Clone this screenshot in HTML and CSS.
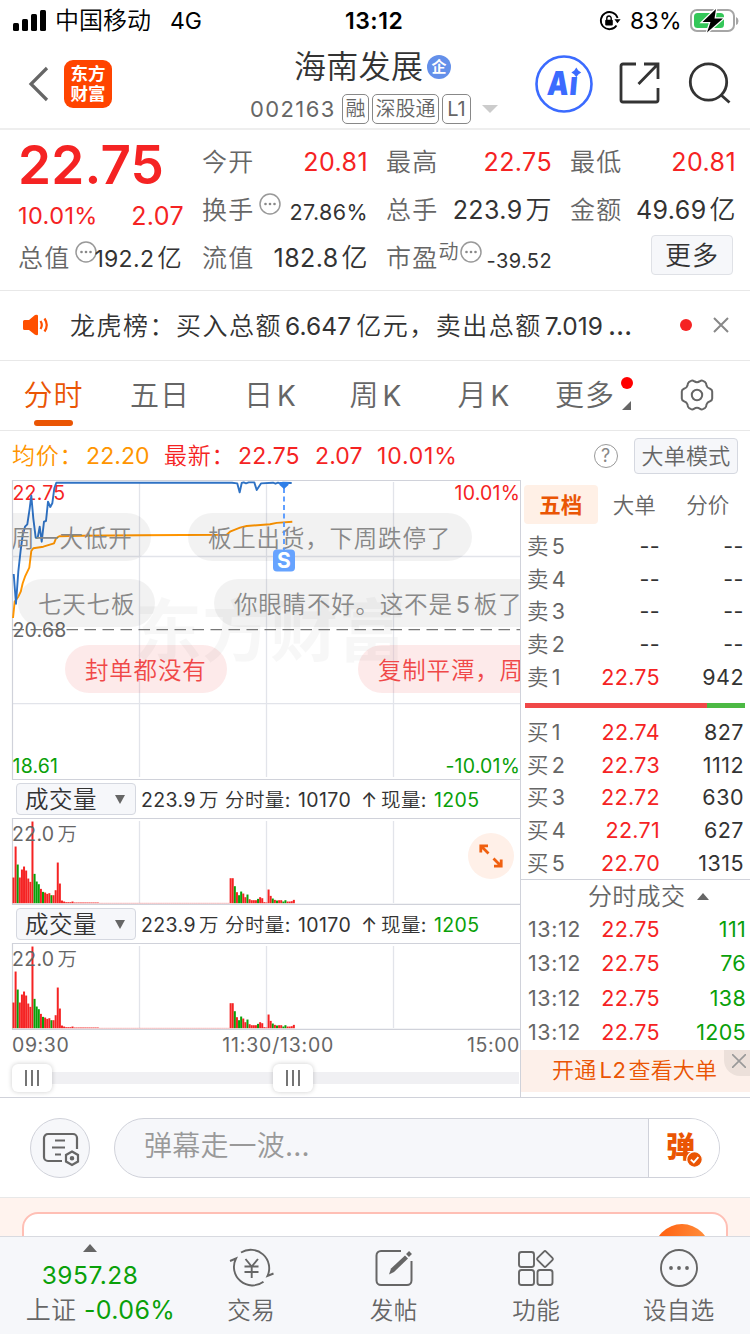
FILE: index.html
```html
<!DOCTYPE html>
<html lang="zh-CN">
<head>
  <meta charset="UTF-8" />
  <meta name="viewport" content="width=device-width, initial-scale=1.0"/>
  <title>海南发展 002163</title>
  <link rel="stylesheet" href="styles.css">
</head>
<body>
  <div class="status-bar">
    <svg class="signal" width="34" height="24" viewBox="0 0 34 24">
      <rect x="0" y="14" width="6" height="8" rx="1.5"/>
      <rect x="9" y="10" width="6" height="12" rx="1.5"/>
      <rect x="18" y="5" width="6" height="17" rx="1.5"/>
      <rect x="27" y="1" width="6" height="21" rx="1.5"/>
    </svg>
    <span class="carrier">中国移动</span>
    <span class="network">4G</span>
    <span class="clock">13:12</span>
    <svg class="lock" width="22" height="22" viewBox="0 0 22 22">
      <path d="M17.5 15.5A8.6 8.6 0 1 1 18.6 8" fill="none" stroke="#000" stroke-width="1.8"/>
      <path d="M15.4 9.2h6.2l-3.1 4z"/>
      <rect x="6.2" y="9.8" width="7.6" height="5.6" rx="1"/>
      <path d="M7.8 10V8.2a2.2 2.2 0 0 1 4.4 0V10" fill="none" stroke="#000" stroke-width="1.4"/>
    </svg>
    <span class="percent">83%</span>
    <svg class="battery" width="50" height="26" viewBox="0 0 50 26">
      <rect x="1" y="2" width="43" height="21" rx="6" fill="none" stroke="#a6a6a6" stroke-width="2"/>
      <path d="M46 9v8q2.5-1 2.5-4T46 9z" fill="#a6a6a6"/>
      <rect x="4" y="5" width="30" height="15" rx="3.5" fill="#34c759"/>
      <path d="M26 1L12.5 14h8L17 24.500 33 10.500h-8.500z" stroke="#fff" stroke-width="2.5" paint-order="stroke"/>
    </svg>
  </div>

  <header class="header">
    <svg class="back" width="22" height="36" viewBox="0 0 22 36"><path d="M20 2L4 18l16 16" fill="none" stroke="#666" stroke-width="3.2"/></svg>
    <div class="logo"><span>东方</span><span>财富</span></div>
    <div class="stock">
      <div class="stock-name">海南发展<span class="badge">企</span></div>
      <div class="stock-code">
        <span class="code">002163</span>
        <span class="tag">融</span><span class="tag wide">深股通</span><span class="tag l1">L1</span>
        <svg class="drop" width="16" height="8"><path d="M0 0h16L8 8z" fill="#ccc"/></svg>
      </div>
    </div>
    <svg class="ai" width="58" height="58" viewBox="0 0 58 58">
      <circle cx="29" cy="29" r="27.5" fill="#fff" stroke="#3b6bff" stroke-width="2.6"/>
      <text class="ai-text" transform="translate(11.500 40) skewX(-5) scale(.82 1)">Ai</text>
      <path d="M34 11h12v9.500H34z" fill="#fff"/>
      <path d="M41.300 12.500l2 2.900 2.900 2-2.900 2-2 2.900-2-2.900-2.900-2 2.900-2z" fill="#3b6bff"/>
    </svg>
    <svg class="share" width="42" height="42" viewBox="0 0 42 42" fill="none" stroke="#333" stroke-width="2.8">
      <path d="M17 2H4a2 2 0 0 0-2 2v34a2 2 0 0 0 2 2h33a2 2 0 0 0 2-2V26M25 2h14v15M39 2L19.500 22"/>
    </svg>
    <svg class="search" width="44" height="44" viewBox="0 0 44 44" fill="none" stroke="#333" stroke-width="2.8">
      <circle cx="20.500" cy="21" r="18.200"/><path d="M32.500 33.500l9 8"/>
    </svg>
  </header>

  <section class="quote">
    <div class="cell price">22.75</div>
    <div class="cell"><label>今开</label><b class="red">20.81</b></div>
    <div class="cell"><label>最高</label><b class="red">22.75</b></div>
    <div class="cell"><label>最低</label><b class="red">20.81</b></div>

    <div class="cell change"><b class="red pct">10.01%</b><b class="red">2.07</b></div>
    <div class="cell"><label>换手</label><svg class="more" width="22" height="22"><use href="#dots"/></svg><b class="s22">27.86%</b></div>
    <div class="cell"><label>总手</label><b>223.9<i>万</i></b></div>
    <div class="cell"><label>金额</label><b>49.69<i>亿</i></b></div>

    <div class="cell"><label>总值</label><svg class="more" width="22" height="22"><use href="#dots"/></svg><b class="s23">192.2<i>亿</i></b></div>
    <div class="cell"><label>流值</label><b>182.8<i>亿</i></b></div>
    <div class="cell"><label>市盈<sup>动</sup></label><svg class="more pe" width="22" height="22"><use href="#dots"/></svg><b class="s20">-39.52</b></div>
    <div class="cell end"><button class="more-btn">更多</button></div>
  </section>

  <div class="notice">
    <svg width="28" height="22" viewBox="0 0 28 22" fill="#ff5000">
      <path d="M1 7.500q0-1.500 1.500-1.500H7l6-5Q16 0 16 2v18q0 2-3 .8L7 16H2.500Q1 16 1 14.500z"/>
      <path d="M18.500 7q2.600 4 0 8M22.500 4.500q4.500 6.500 0 13" fill="none" stroke="#ff5000" stroke-width="2.2"/>
    </svg>
    <span class="notice-text">龙虎榜：买入总额<em>6.647</em>亿元，卖出总额<em>7.019</em><em class="dots">…</em></span>
    <span class="dot"></span>
    <svg width="18" height="18"><path d="M2 2l14 14M16 2L2 16" stroke="#888" stroke-width="2"/></svg>
  </div>

  <nav class="tabs">
    <span class="tab active">分时</span>
    <span class="tab">五日</span>
    <span class="tab">日<i>K</i></span>
    <span class="tab">周<i>K</i></span>
    <span class="tab">月<i>K</i></span>
    <span class="tab tab-more">更多<svg class="corner" width="9" height="9"><path d="M9 0v9H0z" fill="#666"/></svg></span>
    <svg class="gear" width="34" height="34" viewBox="0 0 34 34" fill="none" stroke="#666" stroke-width="2">
      <path d="M10.800 3Q12.500 2 14 3.200 17 5.200 20 3.200 21.500 2 23.200 3L25.200 4.200Q26.300 5 26.500 7.500 27.200 10 30 10.800 32.200 11.600 32.200 13.500V20.500Q32.200 22.400 30 23.200 27.200 24 26.500 26.500 26.300 29 25.200 29.800L23.200 31Q21.500 32 20 30.800 17 28.800 14 30.800 12.500 32 10.800 31L8.800 29.800Q7.700 29 7.500 26.500 6.800 24 4 23.200 1.800 22.400 1.800 20.500V13.500Q1.800 11.600 4 10.800 6.800 10 7.500 7.500 7.700 5 8.800 4.200z"/>
      <circle cx="17" cy="17" r="5.200"/>
    </svg>
  </nav>

  <div class="summary">
    <span class="orange">均价：</span><span class="orange num">22.20</span>
    <span class="red">最新：</span><span class="red num">22.75</span><span class="red num">2.07</span><span class="red">10.01%</span>
    <span class="help">?</span>
    <button class="mode-btn">大单模式</button>
  </div>

  <main class="board">
    <div class="charts">
      <div class="price-chart">
        <svg width="521" height="300" viewBox="0 480 521 300">
          <text class="watermark" x="134" y="656">东方财富</text>
          <g stroke="#e2e4ea" stroke-width="1.3">
            <path d="M139.500 482v295M266.500 482v295M393.500 482v295M13 556.500h507M13 703.700h507"/>
          </g>
          <path d="M12.500 480.500H520.500M12.500 480v299.500H520.500" fill="none" stroke="#d0d2da" stroke-width="1.2"/>
          <path d="M12.500 629.600H520" stroke="#777" stroke-width="1.3" stroke-dasharray="11.500 6.500"/>
          <text class="axis red" x="12.500" y="500">22.75</text>
          <text class="axis red" x="520" y="500" text-anchor="end">10.01%</text>
          <text class="axis gray" x="12.500" y="636.500">20.68</text>
          <text class="axis green" x="12.500" y="772.500">18.61</text>
          <text class="axis green" x="520" y="772.500" text-anchor="end">-10.01%</text>
          <g fill="none" stroke-width="1.9" stroke-linejoin="round">
            <path stroke="#ff9500" d="M13 618l1.700-16.300 1.300-1.700 2.300-3.300 2.400-5 2-8.400 2.300-6.600 4.300-9 2-16.700 2-2.700 10-1.600 10.700-3.400 2-5 3.300-2 20.700-.6 59.300-.4L226.700 534.700 230 531.700 240 527.700 246.700 526 270 524.300 276.700 522.900 292.300 521.700"/>
            <path stroke="#2f72c4" d="M13.700 574l2.300 29.700 2.300-32 2.400-21.700 2-15 2.300-8.300 2.300-2.400 2.400-16 1.600-12.600 2 22.600 2.400 19.400h2l2-11 2 15 2.300-20 2-.7 2-19.300 2.300 5.300 2-3.700 2-15 2-5.600h175.700l5.300.7 2.400 9 2-9.400 2-.6 2.300 1 2.700-1h5.600l2.400 7.600 4.300-6.600 12-.7 2.500 1 2.500-1 2.500 1 2.500-1 8.700.3"/>
          </g>
        </svg>
        <div class="danmu">
          <span class="bubble b1">周一大低开</span>
          <span class="bubble b2">板上出货，下周跌停了</span>
          <span class="bubble b3">七天七板</span>
          <span class="bubble b4">你眼睛不好。这不是<i>5</i>板了</span>
          <span class="bubble hot b5">封单都没有</span>
          <span class="bubble hot b6">复制平潭，周一</span>
        </div>
        <svg class="sell-mark" width="24" height="94" viewBox="272 480 24 94">
          <path d="M284 488v62" stroke="#5096ff" stroke-width="1.8" stroke-dasharray="5 3.500"/>
          <path d="M279.500 482h9v3l-4.500 4-4.500-4z" fill="#2f7fe8"/>
          <rect x="273" y="549.500" width="22" height="22" rx="4" fill="#66a3ff"/>
          <text x="284" y="568" text-anchor="middle">S</text>
        </svg>
      </div>

      <div class="indicator">
        <button class="select">成交量<svg width="10" height="9"><path d="M0 0h10L5 9z" fill="#666"/></svg></button>
        <span>223.9<i>万</i></span><span>分时量:</span><span>10170</span><span>↑</span><span>现量:</span><span class="green">1205</span>
      </div>
      <div class="volume">
        <svg class="bars" width="521" height="87" viewBox="0 818 521 87"></svg>
        <span class="vmax">22.0<i>万</i></span>
        <span class="expand"><svg width="24" height="24" viewBox="0 0 24 24" fill="none" stroke="#f06010" stroke-width="2.8">
          <path d="M1.800 8.500V1.800H9M2 2l7.500 7.500M22.200 15.500v6.700H15M22 22l-7.500-7.500"/></svg></span>
      </div>
      <div class="indicator">
        <button class="select">成交量<svg width="10" height="9"><path d="M0 0h10L5 9z" fill="#666"/></svg></button>
        <span>223.9<i>万</i></span><span>分时量:</span><span>10170</span><span>↑</span><span>现量:</span><span class="green">1205</span>
      </div>
      <div class="volume">
        <svg class="bars" width="521" height="87" viewBox="0 818 521 87"></svg>
        <span class="vmax">22.0<i>万</i></span>
      </div>
      <div class="times"><span>09:30</span><span>11:30/13:00</span><span>15:00</span></div>
      <div class="slider">
        <span class="handle"><svg width="16" height="16"><path d="M2 0v16M8 0v16M14 0v16" stroke="#666" stroke-width="1.8"/></svg></span>
        <span class="handle"><svg width="16" height="16"><path d="M2 0v16M8 0v16M14 0v16" stroke="#666" stroke-width="1.8"/></svg></span>
      </div>
    </div>

    <aside class="orders">
      <div class="order-tabs"><span class="on">五档</span><span>大单</span><span>分价</span></div>
      <div class="level"><span>卖<i>5</i></span><span>--</span><span>--</span></div>
      <div class="level"><span>卖<i>4</i></span><span>--</span><span>--</span></div>
      <div class="level"><span>卖<i>3</i></span><span>--</span><span>--</span></div>
      <div class="level"><span>卖<i>2</i></span><span>--</span><span>--</span></div>
      <div class="level"><span>卖<i>1</i></span><span class="red">22.75</span><span>942</span></div>
      <div class="ratio"></div>
      <div class="level"><span>买<i>1</i></span><span class="red">22.74</span><span>827</span></div>
      <div class="level"><span>买<i>2</i></span><span class="red">22.73</span><span>1112</span></div>
      <div class="level"><span>买<i>3</i></span><span class="red">22.72</span><span>630</span></div>
      <div class="level"><span>买<i>4</i></span><span class="red">22.71</span><span>627</span></div>
      <div class="level"><span>买<i>5</i></span><span class="red">22.70</span><span>1315</span></div>
      <div class="deals-title">分时成交<svg width="12" height="7"><path d="M0 7L6 0l6 7z" fill="#666"/></svg></div>
      <div class="deal"><span>13:12</span><span class="red">22.75</span><span class="green">111</span></div>
      <div class="deal"><span>13:12</span><span class="red">22.75</span><span class="green">76</span></div>
      <div class="deal"><span>13:12</span><span class="red">22.75</span><span class="green">138</span></div>
      <div class="deal"><span>13:12</span><span class="red">22.75</span><span class="green">1205</span></div>
      <div class="promo">开通<em>L2</em>查看大单<span class="promo-close"><svg width="14" height="14"><path d="M0 0l14 14M14 0L0 14" stroke="#999" stroke-width="1.6"/></svg></span></div>
    </aside>
  </main>

  <div class="comment">
    <span class="comment-set">
      <svg width="38" height="36" viewBox="0 0 38 36" fill="none" stroke="#666" stroke-width="2.2">
        <path d="M20 29H6a4 4 0 0 1-4-4V6a4 4 0 0 1 4-4h25a4 4 0 0 1 4 4v11"/>
        <path d="M13 8.500h10M10 15.500h13M13 22.500h6"/>
        <path d="M30 19.500l6 3.500v6.500L30 33l-6-3.500V23z"/><circle cx="30" cy="26.300" r="1.2" fill="#666"/>
      </svg>
    </span>
    <div class="comment-box">
      <span class="placeholder">弹幕走一波...</span>
      <span class="comment-toggle">弹<svg width="17" height="17" viewBox="0 0 17 17"><circle cx="8.500" cy="8.500" r="7.800" fill="#ea5504" stroke="#fff" stroke-width="1.2"/><path d="M4.800 8.600l3 2.800 4.600-5.200" fill="none" stroke="#fff" stroke-width="1.8"/></svg></span>
    </div>
  </div>

  <div class="feed"><div class="feed-card"><span class="feed-ball"></span></div></div>

  <nav class="bottom-nav">
    <div class="index">
      <svg width="14" height="8"><path d="M0 8l7-8 7 8z" fill="#666"/></svg>
      <span class="green">3957.28</span>
      <span class="index-row">上证 <span class="green">-0.06%</span></span>
    </div>
    <div class="nav-item">
      <svg width="46" height="42" viewBox="0 0 46 42" fill="none" stroke="#666" stroke-width="1.9">
        <path d="M13 5.500A18.500 18.500 0 0 1 39.500 29l6-2.500M2 14l6-2.500A18.500 18.500 0 0 0 35.500 34.800"/>
        <path d="M17.500 12l6.200 7.500L30 12M23.700 19.500V31M16.500 19.500h14M16.500 25h14"/>
      </svg>
      <span>交易</span>
    </div>
    <div class="nav-item">
      <svg width="42" height="42" viewBox="0 0 42 42" fill="none" stroke="#666" stroke-width="2">
        <path d="M28 4H8a4.500 4.500 0 0 0-4.500 4.500v25A4.500 4.500 0 0 0 8 38h26a4.500 4.500 0 0 0 4.500-4.500V14"/>
        <path d="M16 27.500l2-6L32 8.500l3 3L21 25z" fill="#666" stroke="none"/><path d="M34.500 8.500l3-3" stroke-width="4"/>
      </svg>
      <span>发帖</span>
    </div>
    <div class="nav-item">
      <svg width="42" height="42" viewBox="0 0 42 42" fill="none" stroke="#666" stroke-width="1.9">
        <rect x="4" y="5" width="15" height="15" rx="2.500"/><rect x="4" y="23" width="15" height="15" rx="2.500"/><rect x="22.500" y="23" width="15" height="15" rx="2.500"/>
        <rect x="24" y="6" width="12" height="12" rx="1.500" transform="rotate(45 30 12)"/>
      </svg>
      <span>功能</span>
    </div>
    <div class="nav-item">
      <svg width="42" height="42" viewBox="0 0 42 42" fill="#666">
        <circle cx="21" cy="21" r="18" fill="none" stroke="#666" stroke-width="1.9"/>
        <circle cx="13" cy="21" r="1.900"/><circle cx="21" cy="21" r="1.900"/><circle cx="29" cy="21" r="1.900"/>
      </svg>
      <span>设自选</span>
    </div>
  </nav>

  <svg class="defs" width="0" height="0">
    <symbol id="dots" viewBox="0 0 22 22">
      <circle cx="11" cy="11" r="10" fill="none" stroke="#999" stroke-width="1.5"/>
      <circle cx="6.500" cy="11" r="1.300" fill="#888"/><circle cx="11" cy="11" r="1.300" fill="#888"/><circle cx="15.500" cy="11" r="1.300" fill="#888"/>
    </symbol>
  </svg>
  <script src="chart.js"></script>
</body>
</html>
```
FILE: styles.css
```css
:root {
  --red: #f52323;
  --green: #09a009;
  --orange: #ea5504;
  --text: #333;
  --gray: #666;
  --line: #d0d2da;
  --bold-font: Inter, "Noto Sans CJK SC", sans-serif;
}

* {
  margin: 0;
  padding: 0;
  box-sizing: border-box;
}

body {
  width: 750px;
  height: 1334px;
  overflow: hidden;
  background: #fff;
  color: var(--text);
  font-family: Inter, "Noto Sans CJK SC DemiLight", "Noto Sans CJK SC Light", "Noto Sans CJK SC", sans-serif;
  font-size: 25px;
  line-height: 30px;
}

b, i, em { font-weight: inherit; font-style: normal; }
svg { display: block; flex: none; }
button { font: inherit; color: inherit; }
.defs { position: absolute; }
.red { color: var(--red); fill: var(--red); }
.green { color: var(--green); fill: var(--green); }
.gray { fill: var(--gray); }
.orange { color: #ff9500; }

/* status bar */
.status-bar {
  display: flex;
  align-items: center;
  height: 40px;
  padding: 1px 0 0 13px;
  color: #000;
  font-size: 23px;
}
.carrier { width: 115px; margin-left: 8px; font-size: 24px; }
.network { width: 175px; }
.clock { width: 254px; font-weight: 600; letter-spacing: .5px; }
.percent { width: 52px; margin-left: 9px; letter-spacing: .3px; }
.battery { margin-left: 8px; }

/* header */
.header {
  display: flex;
  height: 90px;
  border-bottom: 2px solid #eee;
}
.back { margin: 26px 0 0 27px; }
.logo {
  display: flex;
  flex-direction: column;
  width: 48px;
  height: 48px;
  margin: 20px 0 0 15px;
  padding-top: 4px;
  border-radius: 9px;
  background: #ff4400;
  color: #fff;
  font-family: var(--bold-font);
  font-size: 17.5px;
  font-weight: 700;
  line-height: 20px;
  text-align: center;
}
.stock { width: 250px; margin-left: 137px; }
.stock-name {
  display: flex;
  align-items: center;
  height: 46px;
  margin: 4px 0 0 45px;
  font-size: 32px;
  letter-spacing: .3px;
}
.badge {
  width: 24px;
  height: 24px;
  margin-left: 4px;
  border-radius: 12px;
  background: #6490ea;
  color: #fff;
  font-family: var(--bold-font);
  font-size: 15px;
  font-weight: 700;
  line-height: 23px;
  text-align: center;
}
.stock-code { display: flex; align-items: center; height: 38px; color: var(--gray); }
.code { width: 92px; margin-left: 1px; font-size: 22px; letter-spacing: 1.4px; }
.tag {
  width: 27px;
  height: 30px;
  margin-right: 3px;
  border: 1.3px solid #888;
  border-radius: 5px;
  font-size: 20px;
  line-height: 29px;
  text-align: center;
}
.tag.wide { width: 67px; }
.tag.l1 { width: 29px; margin-right: 11px; }
.ai { margin: 15px 0 0 36px; }
.ai-text { fill: #3b6bff; font-size: 33px; font-weight: 900; letter-spacing: 1px; }
.share { margin: 22px 0 0 26px; }
.search { margin: 21px 0 0 27px; }

/* quote */
.quote {
  display: grid;
  grid-template-columns: repeat(4, 166px);
  grid-template-rows: repeat(3, 48px);
  column-gap: 18px;
  height: 161px;
  padding: 7px 0 0 18px;
  border-bottom: 1px solid #e8e8e8;
}
.cell { display: flex; align-items: center; }
.cell label { padding-top: 1px; color: var(--gray); letter-spacing: 1.2px; }
.cell b { margin-left: auto; padding-top: 1px; white-space: nowrap; letter-spacing: .4px; }
.cell i { margin-left: 3px; font-size: 26px; }
.cell.price { padding-top: 8px; color: var(--red); font-size: 53px; font-weight: 600; letter-spacing: .2px; }
.cell.change { padding-top: 13px; }
.cell.change .pct { margin-left: 0; padding-top: 0; font-size: 23.5px; }
.more { margin: -10px 0 0 5px; }
.more.pe { margin-left: 2px; }
.cell .s22 { padding-top: 5px; font-size: 21.5px; }
.cell .s23 { margin-left: -3px; padding-top: 3px; font-size: 23px; letter-spacing: .3px; }
.cell .s23 i { font-size: 24.5px; }
.cell .s20 { padding-top: 8px; font-size: 20px; }
.cell sup { font-size: 20px; line-height: 0; vertical-align: 8px; letter-spacing: 0; }
.cell.end { justify-content: flex-end; }
.more-btn {
  width: 82px;
  height: 40px;
  margin: -4px 3px 0 0;
  padding-top: 1px;
  border: 1.5px solid #dfe1e6;
  border-radius: 4px;
  background: #f6f7fa;
  font-size: 26px;
  letter-spacing: 1px;
}

/* notice */
.notice {
  display: flex;
  align-items: center;
  height: 70px;
  padding: 0 0 1px 22px;
  border-bottom: 1px solid #e8e8e8;
}
.notice-text { width: 570px; margin-left: 20px; white-space: nowrap; letter-spacing: 1.5px; }
.notice-text em { margin: 0 5px 0 3px; font-size: 24.5px; letter-spacing: .1px; }
.notice-text .dots { margin: 0; font-size: 28px; }
.dot { width: 12px; height: 12px; margin: 0 20px 0 40px; border-radius: 6px; background: #f52323; }

/* tabs */
.tabs {
  display: grid;
  grid-template-columns: 107px 106px 114px 97px 119px 84px 1fr;
  height: 70px;
  border-bottom: 1px solid #e8e8e8;
  color: var(--gray);
  font-size: 29px;
  line-height: 70px;
  text-align: center;
  letter-spacing: 1px;
}
.tab { position: relative; }
.tab i { margin-left: 3px; font-size: 28px; letter-spacing: 0; }
.tab.active { color: var(--orange); }
.tab.active::after {
  content: "";
  position: absolute;
  left: 34px;
  bottom: 5px;
  width: 39px;
  height: 6px;
  border-radius: 3px;
  background: var(--orange);
}
.tab-more::after {
  content: "";
  position: absolute;
  right: -6px;
  top: 16px;
  width: 12px;
  height: 12px;
  border-radius: 6px;
  background: #f00;
}
.corner { position: absolute; right: -4px; top: 40px; }
.gear { margin: 17px 0 0 53px; }

/* summary */
.summary {
  display: grid;
  grid-template-columns: 74px 78px 74px 77px 62px 217px 40px 104px;
  align-items: center;
  height: 49px;
  padding-left: 12px;
  font-size: 23px;
  letter-spacing: .8px;
  white-space: nowrap;
}
.summary .num { letter-spacing: .1px; }
.help {
  width: 24px;
  height: 24px;
  border: 1.5px solid #999;
  border-radius: 12px;
  color: #888;
  font-size: 18px;
  line-height: 21px;
  text-align: center;
}
.mode-btn {
  height: 36px;
  border: 1.3px solid #d5d8e0;
  border-radius: 4px;
  background: #f6f7fa;
  color: var(--gray);
  font-size: 22px;
  letter-spacing: .3px;
}

/* board */
.board { display: flex; height: 618px; border-bottom: 1px solid var(--line); }
.charts { width: 521px; border-right: 1px solid var(--line); }
.price-chart { position: relative; height: 300px; }
.watermark { fill: #000; fill-opacity: .03; font-family: var(--bold-font); font-size: 68px; font-weight: 700; }
.axis { font-size: 19.5px; letter-spacing: .2px; }
.danmu {
  position: absolute;
  left: 13px;
  top: 0;
  width: 507px;
  height: 300px;
  overflow: hidden;
}
.bubble {
  position: absolute;
  height: 48px;
  padding-left: 20px;
  border-radius: 24px;
  background: rgba(0, 0, 0, .05);
  color: #888;
  font-size: 23.5px;
  line-height: 51px;
  letter-spacing: .8px;
  white-space: nowrap;
}
.bubble i { margin: 0 3px; }
.bubble.hot { background: rgba(240, 50, 50, .1); color: #f04848; }
.b1 { left: -22px; top: 33px; width: 160px; }
.b2 { left: 175px; top: 33px; width: 284px; }
.b3 { left: 5px; top: 99px; width: 137px; }
.b4 { left: 201px; top: 99px; width: 330px; }
.b5 { left: 52px; top: 165px; width: 162px; }
.b6 { left: 345px; top: 165px; width: 190px; }
.sell-mark { position: absolute; left: 272px; top: 0; }
.sell-mark text { fill: #fff; font-size: 21px; font-weight: 700; }

.indicator {
  display: grid;
  grid-template-columns: 125px 84px 73px 63px 20px 53px 60px;
  align-items: center;
  height: 38px;
  padding-left: 16px;
  font-size: 19.5px;
  letter-spacing: .4px;
  white-space: nowrap;
}
.indicator span { padding-top: 1px; }
.indicator i, .vmax i { margin-left: 3px; }
.select {
  display: flex;
  align-items: center;
  justify-content: space-between;
  width: 120px;
  height: 32px;
  padding: 1px 10px 0 8px;
  border: 1.3px solid #d5d8e0;
  border-radius: 4px;
  background: #f6f7fa;
  font-size: 23.5px;
  letter-spacing: .5px;
}
.volume { position: relative; height: 87px; }
.vmax { position: absolute; left: 12px; top: 1px; color: var(--gray); font-size: 19.5px; letter-spacing: .3px; }
.expand {
  position: absolute;
  left: 468px;
  top: 15px;
  width: 46px;
  height: 46px;
  padding: 11px;
  border-radius: 23px;
  background: #fff0e8;
}
.times {
  display: grid;
  grid-template-columns: 1fr 1fr 1fr;
  padding: 0 0 0 12px;
  color: var(--gray);
  font-size: 19.5px;
  line-height: 30px;
  letter-spacing: .6px;
}
.times span:nth-child(2) { padding-left: 41px; letter-spacing: .8px; }
.times span:nth-child(3) { text-align: right; }
.slider {
  display: flex;
  align-items: center;
  gap: 221px;
  height: 28px;
  margin: 4px 0 0 12px;
  background: linear-gradient(#f0f0f3, #f0f0f3) 20px 8px / 487px 12px no-repeat;
}
.handle {
  width: 40px;
  height: 28px;
  padding: 6px 12px;
  border-radius: 6px;
  background: #fff;
  box-shadow: 0 0 5px rgba(0, 0, 0, .2);
}

/* order book */
.orders { width: 229px; }
.order-tabs {
  display: flex;
  height: 50px;
  padding: 5px 0 0 3px;
  color: var(--gray);
  font-size: 21.5px;
  line-height: 41px;
}
.order-tabs span { width: 73.5px; text-align: center; }
.order-tabs .on {
  height: 39px;
  border-radius: 4px;
  background: #fff0e6;
  color: var(--orange);
  font-family: var(--bold-font);
  font-weight: 700;
}
.level, .deal {
  display: grid;
  grid-template-columns: 60px 1fr 84px;
  align-items: center;
  height: 32.6px;
  padding: 0 6px 0 6px;
  font-size: 21.5px;
  letter-spacing: .3px;
  text-align: right;
}
.level span:first-child, .deal span:first-child { color: var(--gray); text-align: left; }
.level i { margin-left: 3px; }
.level span:last-child { letter-spacing: .5px; }
.deal { height: 34.3px; padding-right: 4px; padding-left: 7px; }
.deal span:first-child { letter-spacing: .6px; }
.deal span:nth-child(2) { margin-right: 2px; }
.ratio {
  width: 220px;
  height: 5px;
  margin: 10px 0 8px 4px;
  background: linear-gradient(90deg, #f04848 182px, #4cb944 182px);
}
.deals-title {
  display: flex;
  align-items: center;
  gap: 12px;
  height: 32.5px;
  margin-top: .5px;
  padding: 1px 0 0 67px;
  border-top: 1px solid var(--line);
  color: var(--gray);
  font-size: 24px;
  letter-spacing: .3px;
}
.promo {
  position: relative;
  height: 42px;
  margin-top: .6px;
  padding-left: 31px;
  background: #fdf0ea;
  color: var(--orange);
  font-size: 22px;
  line-height: 40px;
  letter-spacing: .2px;
}
.promo em { margin: 0 2px 0 3px; letter-spacing: .6px; }
.promo-close {
  position: absolute;
  right: 0;
  top: 0;
  width: 26px;
  height: 26px;
  padding: 4px 0 0 8px;
  border-bottom-left-radius: 16px;
  background: #ece0da;
}

/* comment */
.comment {
  display: flex;
  gap: 24px;
  height: 100px;
  padding: 20px 30px 19px;
  border-bottom: 1px solid #e8e8e8;
}
.comment-set {
  width: 60px;
  height: 60px;
  padding: 13px 0 0 11px;
  border: 1px solid var(--line);
  border-radius: 30px;
  background: #f6f7fa;
}
.comment-box {
  display: flex;
  flex: 1;
  overflow: hidden;
  border: 1px solid var(--line);
  border-radius: 30px;
  background: #f6f7fa;
}
.placeholder { flex: 1; padding-left: 29px; color: #999; font-size: 28px; line-height: 55px; letter-spacing: .2px; }
.comment-toggle {
  position: relative;
  width: 71px;
  padding-left: 17px;
  border-left: 1px solid var(--line);
  background: #fff;
  color: var(--orange);
  font-family: var(--bold-font);
  font-size: 29px;
  font-weight: 900;
  line-height: 58px;
}
.comment-toggle svg { position: absolute; left: 37px; top: 32px; }

.feed { height: 38px; padding: 14px 22px 0; overflow: hidden; background: #fff3ee; }
.feed-card {
  position: relative;
  height: 60px;
  border: 2px solid #ffbfb5;
  border-radius: 16px;
  background: #fff;
}
.feed-ball {
  position: absolute;
  right: 16px;
  top: 10px;
  width: 56px;
  height: 56px;
  border-radius: 28px;
  background: linear-gradient(100deg, #ff5a0a, #ff9a48);
}

/* bottom nav */
.bottom-nav {
  display: grid;
  grid-template-columns: 180px repeat(4, 142.5px);
  height: 98px;
  border-top: 1px solid #d8dae0;
  background: #f6f7fa;
  color: var(--gray);
}
.index { display: flex; flex-direction: column; align-items: center; padding-top: 7px; }
.index > .green { margin-top: 8px; font-size: 24.5px; letter-spacing: .5px; }
.index-row { margin: 5px 0 0 21px; white-space: nowrap; letter-spacing: .4px; }
.nav-item {
  display: flex;
  flex-direction: column;
  align-items: center;
  padding-top: 10px;
  font-size: 23.5px;
  letter-spacing: .4px;
}
.nav-item span { margin-top: 7px; }
```
FILE: chart.js
```js
// [height, color] per minute, thirds of a pixel
const open = [[77,'r'],[170,'r'],[116,'g'],[77,'r'],[101,'r'],[110,'r'],[98,'r'],[74,'r'],[64,'r'],[245,'r'],
  [88,'g'],[65,'g'],[57,'g'],[43,'r'],[34,'g'],[32,'r'],[28,'r'],[30,'r'],[24,'g'],[24,'r'],[39,'r'],[122,'r'],
  [59,'r'],[8,'r'],[5,'r'],[3,'r'],[3,'r'],[3,'r'],[5,'r']];
const late = [[75,'r'],[75,'r'],[51,'g'],[33,'r'],[24,'g'],[35,'g'],[29,'r'],[18,'r'],[26,'g'],[12,'r'],[9,'r'],
  [9,'r'],[9,'r'],[13,'g'],[18,'r'],[15,'r'],[3,'r'],[2,'r'],[41,'r'],[22,'r'],[14,'g'],[10,'r'],[8,'g'],[9,'r'],
  [9,'r'],[5,'g'],[9,'g'],[5,'r'],[5,'r'],[6,'r'],[10,'r']];
const flat = Array.from({ length: 103 - open.length }, (_, i) => [i < 12 ? 2 : 0.8, 'r']);
const volume = [...open, ...flat, ...late];
const fill = { r: '#f52323', g: '#09a009' };

document.querySelectorAll('.bars').forEach((svg) => {
  let html = '<path d="M139.5 821v82M266.5 821v82M393.5 821v82" stroke="#e2e4ea" stroke-width="1.3"/>' +
    '<path d="M520.5 818.5H12.5V904.3H520.5" fill="none" stroke="#d0d2da" stroke-width="1.2"/>';
  volume.forEach(([h, c], i) => {
    html += `<rect x="${(12.5 + i * 2.108).toFixed(2)}" y="${(903.2 - h / 3).toFixed(2)}" width="2" height="${(h / 3).toFixed(2)}" fill="${fill[c]}"/>`;
  });
  svg.innerHTML = html;
});
```
